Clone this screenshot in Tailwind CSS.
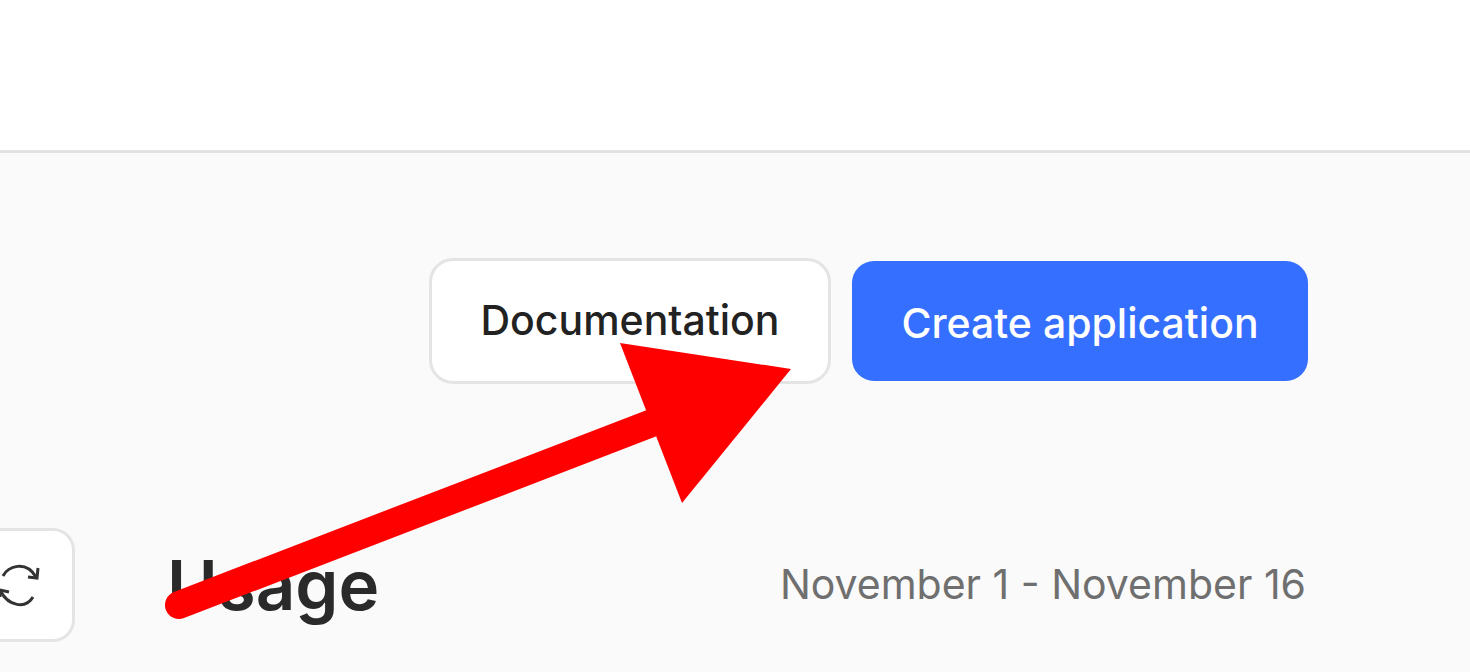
<!DOCTYPE html>
<html lang="en">
<head>
  <meta charset="UTF-8" />
  <title>Usage</title>
  <script src="https://cdn.jsdelivr.net/npm/@tailwindcss/browser@4"></script>
</head>
<body class="bg-white overflow-hidden font-['Inter',sans-serif]">
  <div class="relative w-[1470px] h-[672px] overflow-hidden">
    <div class="h-[153px] border-b-[3px] border-[#e2e2e2] bg-white"></div>
    <div class="bg-[#fafafa] h-[519px] pr-[162px]">
      <div class="flex justify-end items-center gap-[21px] pt-[105px]">
        <button class="w-[402px] h-[126px] bg-white border-[3px] border-[#e4e4e4] rounded-[24px] text-[41px] font-medium text-[#222]">Documentation</button>
        <button class="w-[456px] h-[120px] pt-[6px] bg-[#356fff] rounded-[22px] text-[41px] font-medium text-white">Create application</button>
      </div>
      <div class="flex items-center mt-[144px]">
        <div class="w-[75px] h-[114px] bg-white border-[3px] border-[#e4e4e4] border-l-0 rounded-r-[22px] flex items-center overflow-hidden">
          <svg class="w-[40px] h-[48px]" viewBox="0 0 40 48" fill="none" stroke="#333" stroke-width="3">
            <path d="M3 15C8 5 26 -1 36 16"/>
            <path d="M38 7L37 17L28 16"/>
            <path d="M0 29C8 46 26 48 33 36"/>
            <path d="M0 36L0 29L9 31"/>
          </svg>
        </div>
        <h1 class="ml-[92px] text-[69px] font-semibold text-[#2a2a2a] leading-none">Usage</h1>
        <span class="ml-auto mr-[2px] text-[41px] text-[#6f6f6f]">November 1 - November 16</span>
      </div>
    </div>
    <svg class="absolute inset-0 pointer-events-none" width="1470" height="672" viewBox="0 0 1470 672">
      <path d="M179 605 L652 423" stroke="#ff0000" stroke-width="28" stroke-linecap="round" fill="none"/>
      <polygon points="620,343 791,369 682,503" fill="#ff0000"/>
    </svg>
  </div>
</body>
</html>
